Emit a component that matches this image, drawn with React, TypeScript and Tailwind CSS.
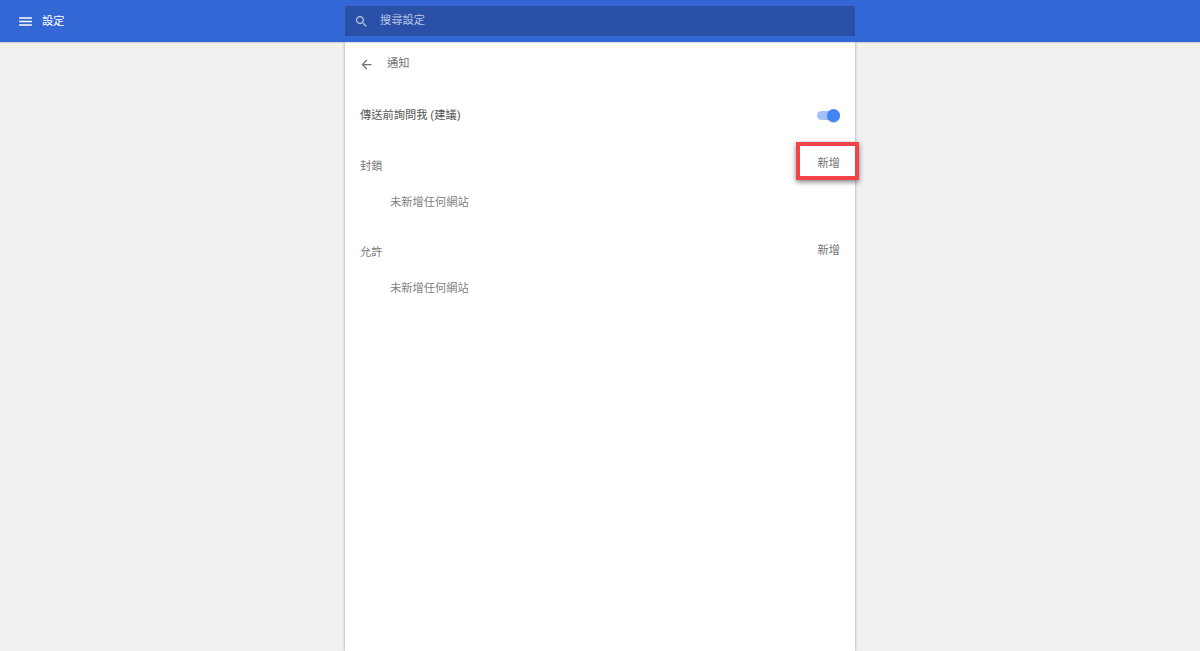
import React from 'react';
import clsx from 'clsx';

function MaterialIcon({ d, size, className }: { d: string; size: number; className?: string }) {
  return (
    <svg width={size} height={size} viewBox="0 0 24 24" fill="currentColor" className={className}>
      <path d={d} />
    </svg>
  );
}

const MENU_PATH = 'M3 18h18v-2H3v2zm0-5h18v-2H3v2zm0-7v2h18V6H3z';
const SEARCH_PATH =
  'M15.5 14h-.79l-.28-.27C15.41 12.59 16 11.11 16 9.5 16 5.91 13.09 3 9.5 3S3 5.91 3 9.5 5.91 16 9.5 16c1.61 0 3.09-.59 4.23-1.57l.27.28v.79l5 4.99L20.49 19l-4.99-5zm-6 0C7.01 14 5 11.99 5 9.5S7.01 5 9.5 5 14 7.01 14 9.5 11.99 14 9.5 14z';
const BACK_PATH = 'M20 11H7.83l5.59-5.59L12 4l-8 8 8 8 1.41-1.41L7.83 13H20v-2z';

function SiteSection({ title, boxed }: { title: string; boxed?: boolean }) {
  return (
    <div>
      <div className="flex justify-between items-start h-[36px] pl-[15px] pr-[15px]">
        <span className="text-[11.25px] leading-[16px] text-[#7a7a7a] mt-[2px]">{title}</span>
        <div className={clsx('relative text-[11.25px] leading-[16px] text-[#737373]', boxed && '-mt-[1px]')}>
          新增
          {boxed && (
            <div className="absolute -left-[21px] -top-[14px] w-[63px] h-[38px] border-[4px] border-[#f4424a] shadow-[0_2px_5px_rgba(0,0,0,0.5)]" />
          )}
        </div>
      </div>
      <div className="pl-[45px] text-[11.25px] leading-[16px] text-[#808080] h-[50px] pt-[2px]">未新增任何網站</div>
    </div>
  );
}

export default function App() {
  return (
    <div className="h-[651px] overflow-hidden flex flex-col bg-[#f1f1f1] font-['Roboto','Noto_Sans_CJK_TC',sans-serif]">
      <header className="h-[42px] shrink-0 bg-[#3367d6] flex items-center relative shadow-[0_1px_1px_rgba(0,0,0,0.12)]">
        <div className="w-[345px] shrink-0 flex items-center pl-[17px] gap-[8px] text-white">
          <MaterialIcon d={MENU_PATH} size={17} />
          <span className="text-[11.25px] leading-[16px] mt-[1px]">設定</span>
        </div>
        <div className="w-[510px] h-[30px] bg-[#2a50a7] flex items-center pl-[9px] gap-[11px] text-[#b8c6e6]">
          <MaterialIcon d={SEARCH_PATH} size={15} />
          <span className="text-[11.25px] leading-[16px]">搜尋設定</span>
        </div>
      </header>
      <main className="flex-1 flex justify-center">
        <div className="w-[510px] bg-white shadow-[0_0_3px_rgba(0,0,0,0.35)]">
          <div className="h-[44px] flex items-center pl-[14px] gap-[13px] text-[#737373]">
            <MaterialIcon d={BACK_PATH} size={15} />
            <span className="text-[11.25px] leading-[16px] -mt-[1px]">通知</span>
          </div>
          <div className="h-[60px] flex items-center justify-between pl-[15px] pr-[16px]">
            <span className="text-[11.25px] leading-[16px] text-[#555555]">傳送前詢問我 (建議)</span>
            <div className="relative w-[23px] h-[9px] -mt-[1px] rounded-full bg-[#a3c1f7] mr-[-1px]">
              <div className="absolute right-0 -top-[2px] w-[13px] h-[13px] rounded-full bg-[#4285f4] shadow-[0_1px_1px_rgba(0,0,0,0.25)]" />
            </div>
          </div>
          <div className="pt-[11px] flex flex-col">
            <SiteSection title="封鎖" boxed />
            <SiteSection title="允許" />
          </div>
        </div>
      </main>
    </div>
  );
}
